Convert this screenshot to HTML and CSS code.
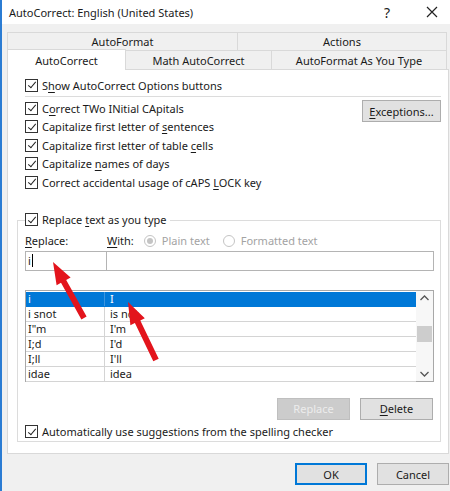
FILE: index.html
```html
<!DOCTYPE html>
<html lang="en">
<head>
    <meta charset="UTF-8">
    <meta name="viewport" content="width=device-width, initial-scale=1.0">
    <title>AutoCorrect</title>
    <link rel="stylesheet" href="styles.css">
</head>
<body>

<div class="window">
    <div class="titlebar">
        <span class="title">AutoCorrect: English (United States)</span>
        <span class="help">?</span>
        <svg class="close" width="12" height="12" viewBox="0 0 12 12">
            <path d="M1 1 L11 11 M11 1 L1 11" stroke="#222" stroke-width="1.2"/>
        </svg>
    </div>

    <div class="content">
        <div class="tabrow">
            <div class="tab t-autoformat">AutoFormat</div>
            <div class="tab t-actions">Actions</div>
        </div>
        <div class="tabrow">
            <div class="tab t-autocorrect active">AutoCorrect</div>
            <div class="tab t-math">Math AutoCorrect</div>
            <div class="tab t-astype">AutoFormat As You Type</div>
        </div>

        <div class="panel">
            <div class="top">
                <label class="check"><span class="cb"></span><span>S<u>h</u>ow AutoCorrect Options buttons</span></label>
                <div class="sep"></div>
                <div class="options">
                    <div class="opt-list">
                        <label class="check"><span class="cb"></span><span>C<u>o</u>rrect TWo INitial CApitals</span></label>
                        <label class="check"><span class="cb"></span><span>Capitalize first letter of <u>s</u>entences</span></label>
                        <label class="check"><span class="cb"></span><span>Capitalize first letter of table <u>c</u>ells</span></label>
                        <label class="check"><span class="cb"></span><span>Capitalize <u>n</u>ames of days</span></label>
                        <label class="check"><span class="cb"></span><span>Correct accidental usage of cAPS <u>L</u>OCK key</span></label>
                    </div>
                    <button class="btn exceptions"><u>E</u>xceptions...</button>
                </div>
            </div>

            <div class="group">
                <label class="check legend"><span class="cb"></span><span>Replace <u>t</u>ext as you type</span></label>
                <div class="labels">
                    <span class="lbl-replace"><u>R</u>eplace:</span>
                    <span class="lbl-with"><u>W</u>ith:</span>
                    <span class="radio on"></span><span class="dim">Plain text</span>
                    <span class="radio"></span><span class="dim">Formatted text</span>
                </div>
                <div class="inputs">
                    <div class="field f-replace">i<span class="caret"></span></div>
                    <div class="field f-with"></div>
                </div>
                <div class="list">
                    <div class="rows">
                        <div class="row selected"><span class="c1">i</span><span class="c2">I</span></div>
                        <div class="row"><span class="c1">i snot</span><span class="c2">is not</span></div>
                        <div class="row"><span class="c1">I"m</span><span class="c2">I'm</span></div>
                        <div class="row"><span class="c1">I;d</span><span class="c2">I'd</span></div>
                        <div class="row"><span class="c1">I;ll</span><span class="c2">I'll</span></div>
                        <div class="row"><span class="c1">idae</span><span class="c2">idea</span></div>
                    </div>
                    <div class="scrollbar">
                        <svg width="17" height="14" viewBox="0 0 17 14"><path d="M4.5 9 L8.5 5 L12.5 9" fill="none" stroke="#555" stroke-width="1.3"/></svg>
                        <div class="track"><div class="thumb"></div></div>
                        <svg width="17" height="14" viewBox="0 0 17 14"><path d="M4.5 5 L8.5 9 L12.5 5" fill="none" stroke="#555" stroke-width="1.3"/></svg>
                    </div>
                </div>
                <div class="actions">
                    <button class="btn disabled">Replace</button>
                    <button class="btn"><u>D</u>elete</button>
                </div>
                <label class="check"><span class="cb"></span><span>Automatically use suggestions from the spelling checker</span></label>
            </div>
        </div>

        <div class="footer">
            <button class="btn default">OK</button>
            <button class="btn">Cancel</button>
        </div>
    </div>

    <!-- red pointers drawn on top of the dialog -->
    <svg class="arrows" width="450" height="491" viewBox="0 0 450 491">
        <polygon fill="#e3141c" points="53,262 70.6,277.4 66.2,279.9 86.6,316.5 81.4,319.5 61,282.8 56.6,285.2"/>
        <polygon fill="#e3141c" points="128,302 144.8,318.3 140.3,320.5 158.7,358.7 153.3,361.3 134.9,323.1 130.4,325.3"/>
    </svg>
</div>

</body>
</html>
```

FILE: styles.css
```css
body {
    margin: 0;
    font-family: "Noto Sans", "Open Sans", sans-serif;
    font-size: 11px;
    color: #1a1a1a;
    background-color: #f0f0f0;
}
u {
    text-decoration-thickness: 1px;
    text-underline-offset: 2px;
}
.window {
    position: relative;
    width: 450px;
    height: 491px;
    border-left: 2px solid #2b7cd3;
    box-sizing: border-box;
    background-color: #f0f0f0;
    overflow: hidden;
}
.titlebar {
    height: 24px;
    background-color: #fff;
    display: flex;
    align-items: center;
    padding-left: 7px;
    font-size: 11px;
}
.title {
    flex: 1;
}
.help {
    font-size: 14px;
    margin-right: 36px;
}
.close {
    margin-right: 12px;
}
.content {
    padding: 8px 1px 0 5px;
}

/* tabs */
.tabrow {
    display: flex;
    height: 18px;
}
.tabrow + .tabrow {
    height: 19px;
}
.tab {
    box-sizing: border-box;
    border: 1px solid #d9d9d9;
    border-bottom: none;
    margin-left: -1px;
    background-color: #f0f0f0;
    display: flex;
    justify-content: center;
    align-items: center;
}
.tab:first-child {
    margin-left: 0;
}
.t-autoformat { width: 231px; }
.t-actions { width: 210px; }
.t-autocorrect { width: 119px; }
.t-math { width: 147px; }
.t-astype { width: 176px; }
.tab.active {
    background-color: #fff;
    height: 21px;
    margin-top: -1px;
    position: relative;
    z-index: 1;
}

/* page body */
.panel {
    width: 442px;
    height: 385px;
    box-sizing: border-box;
    background-color: #fff;
    border: 1px solid #d9d9d9;
    padding: 6px 7px 0 9px;
}
.top {
    padding-left: 8px;
}
.check {
    display: flex;
    align-items: center;
    height: 18px;
    white-space: nowrap;
}
.check > span + span {
    white-space: pre;
}
.cb {
    position: relative;
    width: 13px;
    height: 13px;
    box-sizing: border-box;
    border: 1px solid #333;
    background-color: #fff;
    margin-right: 4px;
    flex-shrink: 0;
}
.cb::after {
    content: "";
    position: absolute;
    left: 3.5px;
    top: 0.5px;
    width: 3px;
    height: 7px;
    border: solid #222;
    border-width: 0 1.2px 1.2px 0;
    transform: rotate(40deg);
}
.sep {
    height: 1px;
    background-color: #dcdcdc;
    margin: 2px 0 2px 0;
}
.options {
    display: flex;
    justify-content: space-between;
}
.opt-list .check {
    height: 18.5px;
}
.btn {
    font-family: inherit;
    font-size: 11px;
    color: #1a1a1a;
    background-color: #e1e1e1;
    border: 1px solid #adadad;
    height: 22px;
    padding: 0;
    margin: 0;
}
.exceptions {
    width: 79px;
    margin-top: 1px;
}

/* replace group */
.group {
    margin-top: 28px;
    height: 222px;
    box-sizing: border-box;
    border: 1px solid #dcdcdc;
    padding: 0 6px 0 7px;
}
.legend {
    width: fit-content;
    background-color: #fff;
    margin-top: -10px;
    padding-right: 3px;
}
.labels {
    display: flex;
    align-items: center;
    height: 18px;
    margin-top: 3px;
}
.lbl-replace {
    width: 82px;
}
.lbl-with {
    margin-right: 10px;
}
.radio {
    width: 12px;
    height: 12px;
    box-sizing: border-box;
    border: 1px solid #c4c4c4;
    border-radius: 50%;
    margin-right: 6px;
    display: flex;
    justify-content: center;
    align-items: center;
}
.radio.on::after {
    content: "";
    width: 6px;
    height: 6px;
    border-radius: 50%;
    background-color: #c4c4c4;
}
.dim {
    color: #a3a3a3;
    margin-right: 13px;
}
.inputs {
    display: flex;
    margin-top: 1px;
    height: 20px;
}
.field {
    box-sizing: border-box;
    border: 1px solid #b4b4b4;
    height: 20px;
    display: flex;
    align-items: center;
    padding-left: 2px;
}
.f-replace {
    width: 82px;
}
.f-with {
    flex: 1;
    margin-left: -1px;
}
.caret {
    width: 1px;
    height: 13px;
    background-color: #000;
    margin-left: 1px;
}

/* entries list */
.list {
    margin-top: 19px;
    height: 92px;
    box-sizing: border-box;
    border: 1px solid #a8a8a8;
    display: flex;
}
.rows {
    flex: 1;
    padding-top: 1px;
}
.row {
    display: flex;
    height: 15px;
    box-sizing: border-box;
    border-bottom: 1px solid #d4d4d4;
    align-items: center;
    line-height: 14px;
}
.row .c1 {
    width: 79px;
    padding-left: 2px;
    box-sizing: border-box;
    border-right: 1px solid #d4d4d4;
    height: 14px;
}
.row .c2 {
    padding-left: 5px;
}
.row.selected {
    background-color: #0078d7;
    color: #fff;
    border-bottom-color: #0078d7;
}
.row.selected .c1 {
    border-right-color: #3c95de;
}
.scrollbar {
    width: 17px;
    background-color: #f7f7f7;
    display: flex;
    flex-direction: column;
}
.track {
    flex: 1;
    padding: 21px 1px 0 1px;
}
.thumb {
    height: 16px;
    background-color: #cdcdcd;
}
.actions {
    display: flex;
    justify-content: flex-end;
    gap: 10px;
    margin-top: 16px;
    padding-right: 1px;
}
.actions .btn {
    width: 73px;
}
.btn.disabled {
    background-color: #cccccc;
    border-color: #bfbfbf;
    color: #ececec;
}
.group > .check:last-child {
    margin-top: 3px;
}

/* dialog buttons */
.footer {
    display: flex;
    justify-content: flex-end;
    gap: 10px;
    margin-top: 9px;
}
.footer .btn {
    width: 72px;
}
.btn.default {
    border-color: #0078d7;
    box-shadow: inset 0 0 0 1px #0078d7;
}
.arrows {
    position: absolute;
    top: 0;
    left: -2px;
    pointer-events: none;
}
```
